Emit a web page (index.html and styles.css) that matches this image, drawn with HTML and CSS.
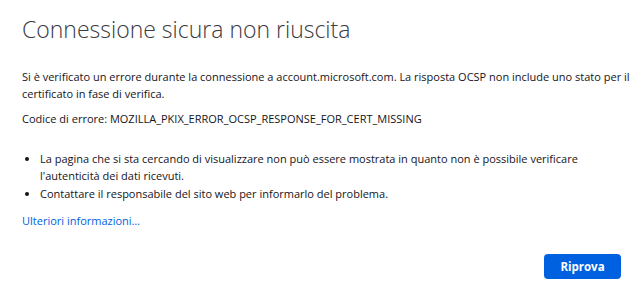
FILE: index.html
```html
<!DOCTYPE html>
<html lang="it">
<head>
  <meta charset="UTF-8" />
  <title>Connessione sicura non riuscita</title>
  <link rel="stylesheet" href="styles.css">
</head>
<body>
  <div class="container">
    <h1 class="title">Connessione sicura non riuscita</h1>

    <p>Si è verificato un errore durante la connessione a account.microsoft.com. La risposta OCSP non include uno stato per il certificato in fase di verifica.</p>
    <p>Codice di errore: MOZILLA_PKIX_ERROR_OCSP_RESPONSE_FOR_CERT_MISSING</p>

    <ul class="advice">
      <li>La pagina che si sta cercando di visualizzare non può essere mostrata in quanto non è possibile verificare l'autenticità dei dati ricevuti.</li>
      <li>Contattare il responsabile del sito web per informarlo del problema.</li>
    </ul>

    <a class="more" href="#">Ulteriori informazioni…</a>

    <div class="actions">
      <button type="button">Riprova</button>
    </div>
  </div>
</body>
</html>
```

FILE: styles.css
```css
* {
  box-sizing: border-box;
}
body {
  margin: 0;
  background: #fff;
  color: #15141a;
  font-family: 'Open Sans', sans-serif;
  font-size: 11px;
}
.container {
  padding: 13px 8px 0 22px;
}
.title {
  margin: 0 0 23px;
  font-size: 23px;
  font-weight: 300;
  color: #3a3a3f;
  line-height: 32px;
}
p {
  margin: 0 0 8px;
  line-height: 17px;
}
.advice {
  margin: 23px 0 10px;
  padding-left: 18px;
}
.advice li {
  line-height: 17px;
  margin-bottom: 1px;
}
.more {
  display: block;
  color: #0061e0;
  text-decoration: none;
  line-height: 17px;
}
.actions {
  display: flex;
  justify-content: flex-end;
  margin-top: 25px;
  padding-right: 11px;
}
button {
  background: #0061e0;
  color: #fff;
  border: none;
  border-radius: 4px;
  font-family: 'Open Sans', sans-serif;
  font-size: 11.5px;
  font-weight: 700;
  padding: 0;
  width: 77px;
  height: 25px;
}
```
